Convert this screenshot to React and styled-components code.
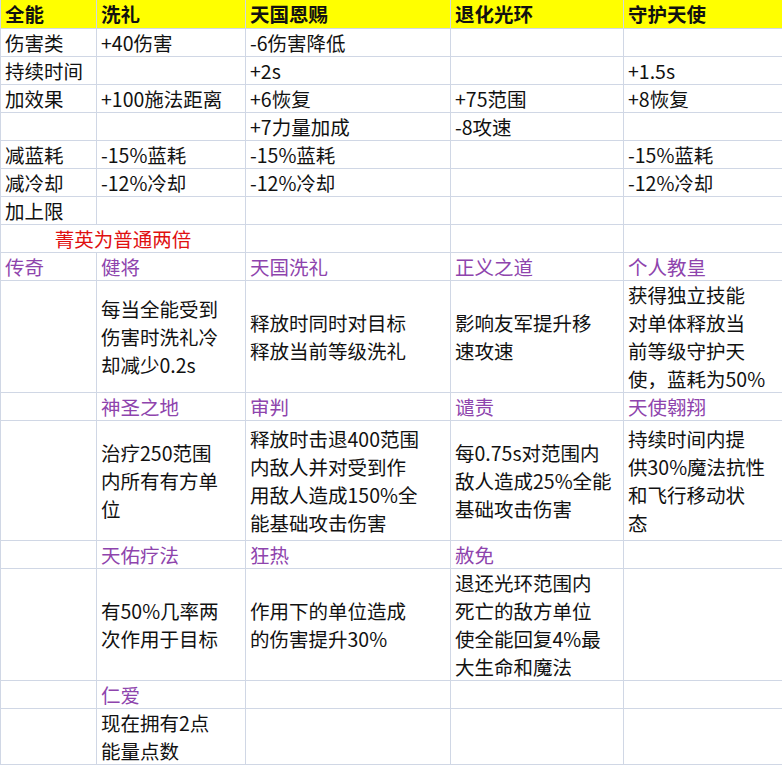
import React from "react";
import styled, { createGlobalStyle } from "styled-components";

const Global = createGlobalStyle`
  body { margin: 0; background: #fff; font-family: "Noto Sans CJK SC", "Liberation Serif", serif; }
`;

const Sheet = styled.div`
  display: grid;
  grid-template-columns: 96px 149px 205px 173px 159px;
  grid-template-rows: 29px repeat(8, 28px) 28px 112px 28px 120px 28px 112px 28px 56px;
  width: 782px;
  border-left: 1px solid #d0d7e5;
  box-sizing: border-box;
`;

const Cell = styled.div`
  grid-column: ${(p) => p.span ? `span ${p.span}` : "auto"};
  background: ${(p) => (p.head ? "#ffff00" : "#fff")};
  border-right: 1px solid #d0d7e5;
  border-bottom: 1px solid #d0d7e5;
  padding: 0 4px;
  display: flex;
  align-items: center;
  justify-content: ${(p) => (p.center ? "center" : "flex-start")};
  font-size: 19.5px;
  line-height: 28px;
  font-weight: ${(p) => (p.head ? 700 : 400)};
  color: ${(p) => p.tone === "purple" ? "#8e44ad" : p.tone === "red" ? "#e01010" : "#111"};
  white-space: pre-line;
  overflow: hidden;
  box-sizing: border-box;
`;

const rows = [
  ["伤害类", "+40伤害", "-6伤害降低", "", ""],
  ["持续时间", "", "+2s", "", "+1.5s"],
  ["加效果", "+100施法距离", "+6恢复", "+75范围", "+8恢复"],
  ["", "", "+7力量加成", "-8攻速", ""],
  ["减蓝耗", "-15%蓝耗", "-15%蓝耗", "", "-15%蓝耗"],
  ["减冷却", "-12%冷却", "-12%冷却", "", "-12%冷却"],
  ["加上限", "", "", "", ""],
];

const legend = [
  [["传奇", "健将", "天国洗礼", "正义之道", "个人教皇"],
   ["", "每当全能受到\n伤害时洗礼冷\n却减少0.2s", "释放时同时对目标\n释放当前等级洗礼", "影响友军提升移\n速攻速", "获得独立技能\n对单体释放当\n前等级守护天\n使，蓝耗为50%"]],
  [["", "神圣之地", "审判", "谴责", "天使翱翔"],
   ["", "治疗250范围\n内所有有方单\n位", "释放时击退400范围\n内敌人并对受到作\n用敌人造成150%全\n能基础攻击伤害", "每0.75s对范围内\n敌人造成25%全能\n基础攻击伤害", "持续时间内提\n供30%魔法抗性\n和飞行移动状\n态"]],
  [["", "天佑疗法", "狂热", "赦免", ""],
   ["", "有50%几率两\n次作用于目标", "作用下的单位造成\n的伤害提升30%", "退还光环范围内\n死亡的敌方单位\n使全能回复4%最\n大生命和魔法", ""]],
  [["", "仁爱", "", "", ""],
   ["", "现在拥有2点\n能量点数", "", "", ""]],
];

export default function App() {
  return (
    <>
      <Global />
      <Sheet>
        {["全能", "洗礼", "天国恩赐", "退化光环", "守护天使"].map((t, i) => (
          <Cell head key={"h" + i}>{t}</Cell>
        ))}
        {rows.map((r, ri) => r.map((t, ci) => <Cell key={`r${ri}-${ci}`}>{t}</Cell>))}
        <Cell span={2} center tone="red">菁英为普通两倍</Cell>
        <Cell /><Cell /><Cell />
        {legend.map(([names, descs], li) => (
          <React.Fragment key={li}>
            {names.map((t, ci) => <Cell tone="purple" key={`n${li}-${ci}`}>{t}</Cell>)}
            {descs.map((t, ci) => <Cell key={`d${li}-${ci}`}>{t}</Cell>)}
          </React.Fragment>
        ))}
      </Sheet>
    </>
  );
}
